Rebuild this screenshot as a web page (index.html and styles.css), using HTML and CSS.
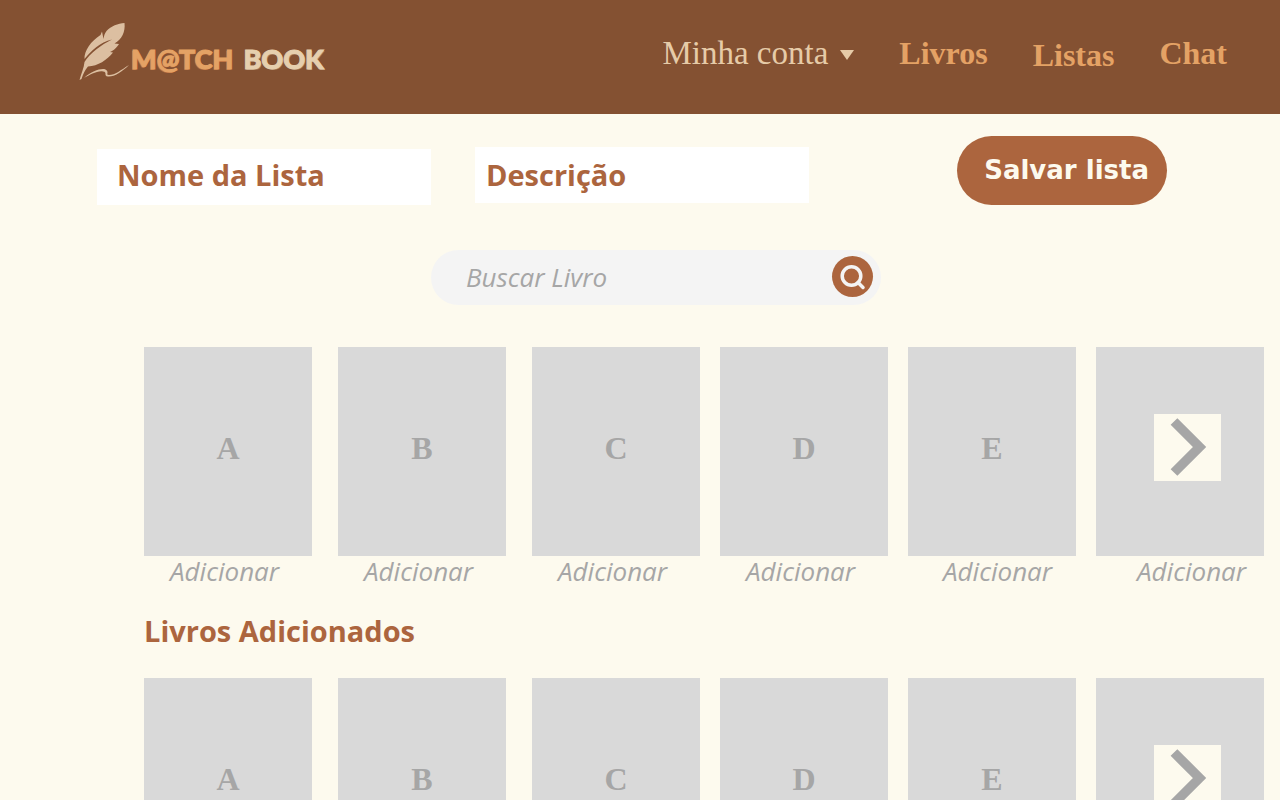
FILE: index.html
```html
<!DOCTYPE html>
<html lang="pt-BR">
<head>
<meta charset="utf-8">
<meta name="viewport" content="width=device-width, initial-scale=1">
<title>Match Book</title>
<link rel="stylesheet" href="styles.css">
</head>
<body>
<header class="topbar">
  <a class="logo" href="#" aria-label="Match Book">
    <svg class="logo-feather" viewBox="0 0 52 60" aria-hidden="true">
      <path fill="#dcbfa1" d="M45.500 1C39 1.500 32 4 27.500 9C25.500 11.500 25 14 24.500 17L23 9.500L21.500 13C12 19 5 29 5.500 37C12 29 21 20 33 17.500C22 23 11 31 5.500 40C5 46 2 52 0.500 58L2.500 57C4 52 6 48 9 44.500C19 44 28 38 34 30.500L31 30C34 29 38 25.500 40 22L35.500 21.500C43 17 46.500 10 45.500 1Z"/>
      <path fill="#dcbfa1" d="M5 56C13 49 22 46 26.500 47.500C31 50 26 53 30 53C36 53 42 48 50 43C43 50 35 55 29 54.500C24 54 29 50 24 49.500C18 48.500 11 53 5 56Z"/>
    </svg>
    <span class="logo-text"><span class="logo-match">M@TCH</span> <span class="logo-book">BOOK</span></span>
  </a>
  <nav class="nav">
    <button class="nav-account" type="button">Minha conta
      <svg class="caret" viewBox="0 0 14 10" aria-hidden="true"><path fill="currentColor" d="M0 0H14L7 10Z"/></svg>
    </button>
    <a class="nav-link" href="#">Livros</a>
    <a class="nav-link nav-link-low" href="#">Listas</a>
    <a class="nav-link" href="#">Chat</a>
  </nav>
</header>
<main>
  <form class="list-form">
    <input class="field field-name" type="text" placeholder="Nome da Lista" aria-label="Nome da Lista">
    <input class="field field-description" type="text" placeholder="Descrição" aria-label="Descrição">
    <button class="save" type="button">Salvar lista</button>
  </form>
  <form class="search" role="search">
    <input class="search-input" type="text" placeholder="Buscar Livro" aria-label="Buscar Livro">
    <button class="search-button" type="button" aria-label="Buscar">
      <svg class="search-icon" viewBox="0 0 41 41" aria-hidden="true">
        <g fill="none" stroke="#f4f4f4" stroke-width="3.500" stroke-linecap="round">
          <circle cx="19.500" cy="20" r="9.300"/>
          <path d="M26 26.500L31 31.500"/>
        </g>
      </svg>
    </button>
  </form>
  <section class="books">
    <article class="book book-spaced"><div class="cover">A</div><button class="add" type="button">Adicionar</button></article>
    <article class="book book-spaced"><div class="cover">B</div><button class="add" type="button">Adicionar</button></article>
    <article class="book"><div class="cover">C</div><button class="add" type="button">Adicionar</button></article>
    <article class="book"><div class="cover">D</div><button class="add" type="button">Adicionar</button></article>
    <article class="book"><div class="cover">E</div><button class="add add-inset" type="button">Adicionar</button></article>
    <article class="book book-last">
      <div class="cover cover-next"><button class="next" type="button" aria-label="Próximos livros"><svg class="chevron" viewBox="0 0 67 67" aria-hidden="true"><path fill="none" stroke="#a6a6a6" stroke-width="9.500" d="M20 7.500L45.500 33L20 58.500"/></svg></button></div>
      <button class="add add-inset-last" type="button">Adicionar</button>
    </article>
  </section>
  <h2 class="section-title">Livros Adicionados</h2>
  <section class="books">
    <article class="book book-spaced"><div class="cover">A</div></article>
    <article class="book book-spaced"><div class="cover">B</div></article>
    <article class="book"><div class="cover">C</div></article>
    <article class="book"><div class="cover">D</div></article>
    <article class="book"><div class="cover">E</div></article>
    <article class="book book-last">
      <div class="cover cover-next"><button class="next" type="button" aria-label="Próximos livros adicionados"><svg class="chevron" viewBox="0 0 67 67" aria-hidden="true"><path fill="none" stroke="#a6a6a6" stroke-width="9.500" d="M20 7.500L45.500 33L20 58.500"/></svg></button></div>
    </article>
  </section>
</main>
</body>
</html>
```
FILE: styles.css
```css
* { box-sizing: border-box; }
body {
  margin: 0;
  background: #fdfaee;
  font-family: "Open Sans", "Noto Sans", sans-serif;
}
button, input { font: inherit; border: 0; margin: 0; padding: 0; }
button { background: none; cursor: pointer; }
a { text-decoration: none; }

.topbar {
  display: flex;
  align-items: flex-start;
  justify-content: space-between;
  min-height: 114px;
  padding: 22px 53px 0 79px;
  background: #845132;
}
.logo { display: flex; align-items: flex-start; }
.logo-feather { width: 52px; height: 60px; }
.logo-text {
  display: flex;
  gap: 10px;
  padding-top: 20px;
  font: 900 27px/34px Lato, sans-serif;
  white-space: nowrap;
  -webkit-text-stroke: 1px currentColor;
}
.logo-match { color: #e4a265; text-shadow: -1px 1px 0 #bd6f3f; }
.logo-book { color: #e6cfae; text-shadow: 1px 1px 0 #a68468; }
.nav {
  display: flex;
  gap: 45px;
  padding-top: 12px;
  font: 32px/38px "Liberation Serif", serif;
  white-space: nowrap;
}
.nav-account { display: flex; align-items: center; gap: 12px; height: 38px; color: #e6cba8; font-size: 33px; }
.caret { width: 14px; height: 10px; margin-top: 4px; }
.nav-link { color: #e4a265; font-weight: 700; }
.nav-link-low { padding-top: 2px; }

.list-form {
  display: flex;
  align-items: flex-end;
  gap: 44px;
  padding: 22px 113px 0 97px;
}
.field {
  flex: 0 1 334px;
  min-width: 0;
  height: 56px;
  background: #fff;
  color: #ac653e;
  font-size: 29px;
  font-weight: 700;
}
.field::placeholder { color: #ac653e; opacity: 1; }
.field-name { padding: 0 20px 6px; }
.field-description { padding: 0 11px 2px; margin-bottom: 2px; }
.save {
  height: 69px;
  margin-left: auto;
  padding: 0 18px 2px 27px;
  border-radius: 35px;
  background: #ac653e;
  color: #fdfaee;
  font: 700 26px/34px "DejaVu Sans", sans-serif;
  white-space: nowrap;
}

.search {
  display: flex;
  align-items: center;
  width: 450px;
  max-width: 100%;
  height: 55px;
  margin: 45px auto 0;
  padding: 0 8px 2px 35px;
  border-radius: 28px;
  background: #f4f4f4;
  position: relative;
  left: 16px;
}
.search-input {
  flex: 1;
  min-width: 0;
  background: none;
  font-size: 26px;
  font-style: italic;
}
.search-input::placeholder { color: #a6a6a6; opacity: 1; }
.search-button { width: 41px; height: 41px; border-radius: 50%; background: #ac653e; }
.search-icon { display: block; width: 100%; }

.books { display: flex; padding: 0 16px 0 144px; }
.book { flex: 1 1 0; min-width: 0; margin-right: 20px; }
.book-spaced { margin-right: 26px; }
.book-last { margin-right: 0; }
.search + .books { padding-top: 42px; }
.cover {
  display: flex;
  align-items: center;
  justify-content: center;
  height: 209px;
  padding-bottom: 8px;
  background: #d9d9d9;
  color: #a6a6a6;
  font: 700 32px/38px "Liberation Serif", serif;
}
.cover-next { padding-left: 14px; }
.next { width: 67px; height: 67px; background: #fdfaee; }
.chevron { display: block; width: 100%; }
.add {
  display: block;
  padding-left: 26px;
  color: #a6a6a6;
  font-size: 26px;
  font-style: italic;
  line-height: 30px;
}
.add-inset { padding-left: 35px; }
.add-inset-last { padding-left: 41px; }
.section-title {
  margin: 25px 144px 28px;
  color: #ac653e;
  font-size: 29px;
  line-height: 39px;
}
```
